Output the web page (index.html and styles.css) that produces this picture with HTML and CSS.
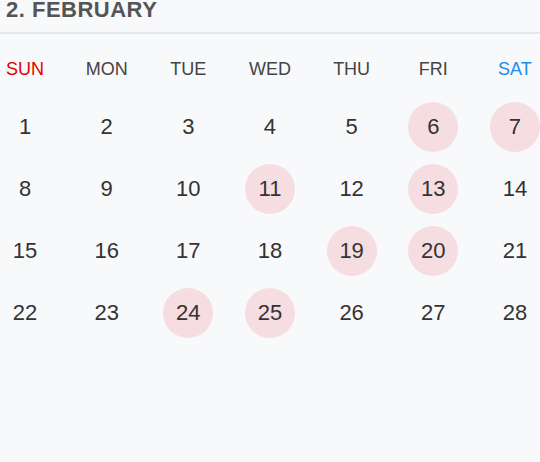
FILE: index.html
```html
<!DOCTYPE html>
<html>
<head>
<meta charset="utf-8">
<link rel="stylesheet" href="styles.css">
</head>
<body>
<div class="calendar">
  <div class="title">2. FEBRUARY</div>
  <div class="weekdays">
    <span class="wd sun">SUN</span>
    <span class="wd">MON</span>
    <span class="wd">TUE</span>
    <span class="wd">WED</span>
    <span class="wd">THU</span>
    <span class="wd">FRI</span>
    <span class="wd sat">SAT</span>
  </div>
  <div class="days">
    <div class="week">
      <span class="day">1</span><span class="day">2</span><span class="day">3</span><span class="day">4</span><span class="day">5</span><span class="day mark">6</span><span class="day mark">7</span>
    </div>
    <div class="week">
      <span class="day">8</span><span class="day">9</span><span class="day">10</span><span class="day mark">11</span><span class="day">12</span><span class="day mark">13</span><span class="day">14</span>
    </div>
    <div class="week">
      <span class="day">15</span><span class="day">16</span><span class="day">17</span><span class="day">18</span><span class="day mark">19</span><span class="day mark">20</span><span class="day">21</span>
    </div>
    <div class="week">
      <span class="day">22</span><span class="day">23</span><span class="day mark">24</span><span class="day mark">25</span><span class="day">26</span><span class="day">27</span><span class="day">28</span>
    </div>
  </div>
</div>
</body>
</html>
```
FILE: styles.css
```css
html, body {
  margin: 0;
  padding: 0;
  background: #f8f9fa;
}
body {
  font-family: "Liberation Sans", Arial, sans-serif;
  width: 540px;
  height: 462px;
  overflow: hidden;
}
.title {
  font-size: 22px;
  line-height: 20px;
  font-weight: bold;
  color: #555;
  letter-spacing: 0.5px;
  padding: 0 0 12px 6px;
  border-bottom: 2px solid #e6e7e8;
}
.weekdays {
  display: flex;
  justify-content: space-between;
  padding-top: 17px;
}
.wd {
  width: 50px;
  text-align: center;
  font-size: 18px;
  line-height: 36px;
  color: #444;
}
.wd.sun { color: #e60000; }
.wd.sat { color: #1a8cf0; }
.days {
  display: flex;
  flex-direction: column;
  gap: 12px;
  margin-top: 15px;
}
.week {
  display: flex;
  justify-content: space-between;
}
.day {
  width: 50px;
  height: 50px;
  border-radius: 50%;
  display: flex;
  align-items: center;
  justify-content: center;
  font-size: 22px;
  color: #333;
}
.day.mark {
  background: #f6dde1;
}
```
